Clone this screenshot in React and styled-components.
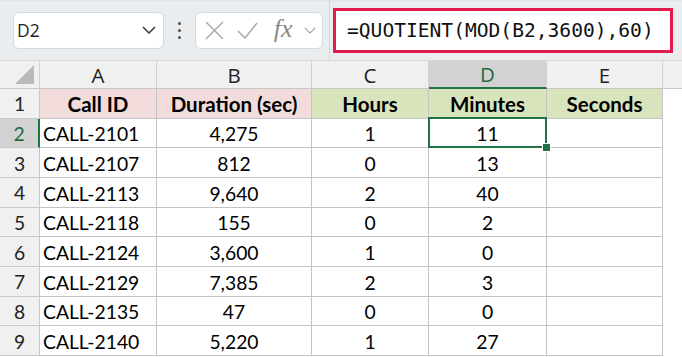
import React from "react";
import styled, { createGlobalStyle } from "styled-components";

const Global = createGlobalStyle`
  html, body { margin: 0; padding: 0; background: #ffffff; overflow: hidden; }
  body { font-family: Lato, "Liberation Sans", sans-serif; }
  * { box-sizing: border-box; }
`;

const Page = styled.div`
  width: 682px;
  height: 357px;
  display: flex;
  flex-direction: column;
  overflow: hidden;
`;

const Toolbar = styled.div`
  height: 60px;
  flex: none;
  display: flex;
  align-items: center;
  padding-left: 13px;
  background: linear-gradient(#dfe3e6 0, #e9edf0 2px, #eaedf0 100%);
`;

const RoundBox = styled.div`
  height: 37px;
  background: #ffffff;
  border: 1px solid #d6d9dc;
  border-radius: 6px;
  display: flex;
  align-items: center;
`;

const NameBox = styled(RoundBox)`
  width: 151px;
  padding: 0 7px 0 3px;
  justify-content: space-between;
  font-family: "Open Sans", Lato, sans-serif;
  font-size: 17.5px;
  color: #1f1f1f;
`;

const Dots = styled.div`
  width: 31px;
  display: flex;
  flex-direction: column;
  align-items: center;
  gap: 4px;
  span {
    width: 3px;
    height: 3px;
    border-radius: 50%;
    background: #5b4a3c;
  }
`;

const FxBox = styled(RoundBox)`
  width: 128px;
  padding: 0 6px 0 9px;
`;

const IconSlot = styled.div`
  width: ${(p) => p.$w}px;
  display: flex;
  align-items: center;
  justify-content: ${(p) => p.$justify || "center"};
`;

const Fx = styled.span`
  font-family: "Liberation Serif", serif;
  font-style: italic;
  font-size: 26px;
  color: #8a8a8a;
  line-height: 1;
  margin-top: -2px;
`;

const Separator = styled.div`
  width: 1px;
  align-self: stretch;
  background: #d3d7da;
  margin-left: 6px;
  margin-right: 3px;
`;

const FormulaBar = styled.div`
  width: 340px;
  height: 45px;
  background: #ffffff;
  border: 3px solid #e11b4b;
  display: flex;
  align-items: center;
  padding-left: 11px;
  font-family: "DejaVu Sans Mono", "Liberation Mono", monospace;
  font-size: 19.6px;
  color: #111111;
`;

const Sheet = styled.div`
  display: grid;
  grid-template-columns: 40px 117px 155px 117px 118px 116px 1fr;
  grid-template-rows: 29px repeat(9, 29.67px);
`;

const ColHeader = styled.div`
  background: ${(p) => (p.$selected ? "#d2d2d2" : "#f0f0f0")};
  border-top: 1px solid #d8d8d8;
  border-right: ${(p) => (p.$noLine ? "none" : "1px solid #d0d0d0")};
  border-bottom: ${(p) => (p.$selected ? "2px solid #217346" : "1px solid #c8c8c8")};
  color: ${(p) => (p.$selected ? "#1e6b41" : "#222222")};
  font-family: "Open Sans", Lato, sans-serif;
  font-size: 20.5px;
  display: flex;
  align-items: center;
  justify-content: center;
  position: relative;
`;

const Corner = styled.div`
  position: absolute;
  right: 5px;
  bottom: 4px;
  width: 0;
  height: 0;
  border-style: solid;
  border-width: 0 0 19px 19px;
  border-color: transparent transparent #b9b9b9 transparent;
`;

const RowHeader = styled.div`
  background: ${(p) => (p.$selected ? "#d2d2d2" : "#f0f0f0")};
  border-right: ${(p) => (p.$selected ? "2px solid #217346" : "1px solid #c8c8c8")};
  border-bottom: 1px solid #c8c8c8;
  color: ${(p) => (p.$selected ? "#1e6b41" : "#222222")};
  font-size: 19.3px;
  display: flex;
  align-items: center;
  justify-content: center;
  padding-top: 1px;
`;

const Cell = styled.div`
  background: ${(p) => p.$bg || "#ffffff"};
  border-right: 1px solid #c4c4c4;
  border-bottom: 1px solid #c4c4c4;
  font-size: ${(p) => (p.$bold ? "20.5px" : "19.3px")};
  font-weight: ${(p) => (p.$bold ? 700 : 400)};
  color: #000000;
  display: flex;
  align-items: center;
  justify-content: ${(p) => (p.$left ? "flex-start" : "center")};
  padding: 2px 3px 0 3px;
  white-space: nowrap;
  position: relative;
`;

const Filler = styled.div`
  background: #ffffff;
`;

const Selection = styled.div`
  position: absolute;
  z-index: 2;
  left: -1px;
  top: -2px;
  right: -1px;
  bottom: -1px;
  border: 2px solid #217346;
  pointer-events: none;
`;

const Handle = styled.div`
  position: absolute;
  z-index: 3;
  right: -6px;
  bottom: -6px;
  width: 9px;
  height: 9px;
  background: #217346;
  border: 1px solid #ffffff;
`;

const Chevron = ({ color = "#3a3a3a", w = 14, h = 8, sw = 1.5 }) => (
  <svg width={w} height={h} viewBox="0 0 14 8" fill="none">
    <polyline points="1,1 7,7 13,1" stroke={color} strokeWidth={sw} />
  </svg>
);

const XIcon = () => (
  <svg width="19" height="19" viewBox="0 0 19 19" fill="none">
    <line x1="1" y1="1" x2="18" y2="18" stroke="#a9a9a9" strokeWidth="1.5" />
    <line x1="18" y1="1" x2="1" y2="18" stroke="#a9a9a9" strokeWidth="1.5" />
  </svg>
);

const CheckIcon = () => (
  <svg width="21" height="17" viewBox="0 0 21 17" fill="none">
    <polyline points="1,9 8,16 20,1" stroke="#a9a9a9" strokeWidth="1.5" />
  </svg>
);

const columns = ["A", "B", "C", "D", "E"];
const pink = "#f2dcdb";
const green = "#d8e4bc";

const rows = [
  ["CALL-2101", "4,275", "1", "11"],
  ["CALL-2107", "812", "0", "13"],
  ["CALL-2113", "9,640", "2", "40"],
  ["CALL-2118", "155", "0", "2"],
  ["CALL-2124", "3,600", "1", "0"],
  ["CALL-2129", "7,385", "2", "3"],
  ["CALL-2135", "47", "0", "0"],
  ["CALL-2140", "5,220", "1", "27"],
];

export default function App() {
  return (
    <Page>
      <Global />
      <Toolbar>
        <NameBox>
          <span>D2</span>
          <Chevron />
        </NameBox>
        <Dots>
          <span />
          <span />
          <span />
        </Dots>
        <FxBox>
          <IconSlot $w={33} $justify="flex-start">
            <XIcon />
          </IconSlot>
          <IconSlot $w={37} $justify="flex-start">
            <CheckIcon />
          </IconSlot>
          <IconSlot $w={30} $justify="flex-start">
            <Fx>fx</Fx>
          </IconSlot>
          <IconSlot $w={13}>
            <Chevron color="#9a9a9a" w={12} h={7} sw={1.3} />
          </IconSlot>
        </FxBox>
        <Separator />
        <FormulaBar>=QUOTIENT(MOD(B2,3600),60)</FormulaBar>
      </Toolbar>
      <Sheet>
        <ColHeader>
          <Corner />
        </ColHeader>
        {columns.map((c) => (
          <ColHeader key={c} $selected={c === "D"}>
            {c}
          </ColHeader>
        ))}
        <ColHeader $noLine />

        <RowHeader>1</RowHeader>
        <Cell $bg={pink} $bold>Call ID</Cell>
        <Cell $bg={pink} $bold>Duration (sec)</Cell>
        <Cell $bg={green} $bold>Hours</Cell>
        <Cell $bg={green} $bold>Minutes</Cell>
        <Cell $bg={green} $bold>Seconds</Cell>
        <Filler />

        {rows.map((r, i) => (
          <React.Fragment key={r[0]}>
            <RowHeader $selected={i === 0}>{i + 2}</RowHeader>
            <Cell $left>{r[0]}</Cell>
            <Cell>{r[1]}</Cell>
            <Cell>{r[2]}</Cell>
            <Cell>
              {r[3]}
              {i === 0 && (
                <Selection>
                  <Handle />
                </Selection>
              )}
            </Cell>
            <Cell />
            <Filler />
          </React.Fragment>
        ))}
      </Sheet>
    </Page>
  );
}
